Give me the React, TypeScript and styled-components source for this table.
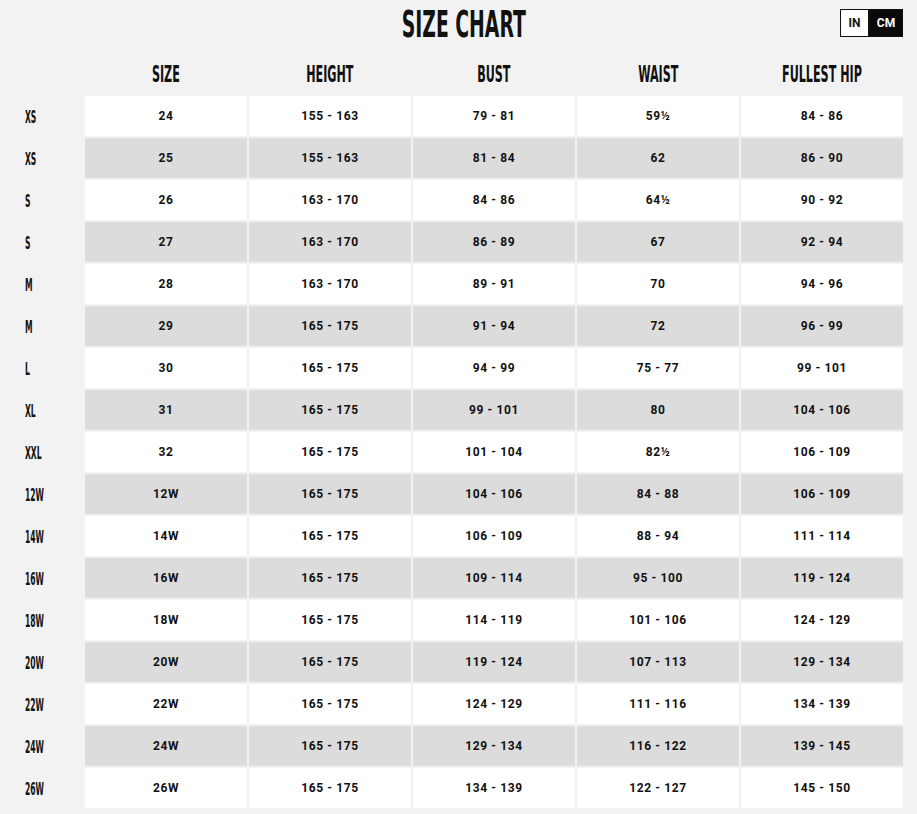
import React from "react";
import styled, { createGlobalStyle } from "styled-components";

const Global = createGlobalStyle`
  html, body { margin: 0; padding: 0; background: #f2f2f2; }
  body { font-family: "Roboto", "DejaVu Sans", sans-serif; color: #111; }
`;

const Page = styled.div`
  width: 917px;
  height: 814px;
  background: #f2f2f2;
  overflow: hidden;
`;

const Header = styled.div`
  display: grid;
  grid-template-columns: 1fr auto 1fr;
  align-items: center;
  height: 48px;
  padding: 0 14px 0 24px;
`;

const Condensed = styled.span<{ $scale: number; $origin?: string }>`
  display: inline-block;
  font-family: "DejaVu Sans Condensed", "DejaVu Sans", sans-serif;
  font-weight: 700;
  transform: scaleX(${(p) => p.$scale});
  transform-origin: ${(p) => p.$origin || "center"};
  white-space: nowrap;
`;

const Title = styled.h1`
  grid-column: 2;
  margin: 0;
  font-size: 38px;
  line-height: 48px;
  font-weight: 700;
  color: #111;
  text-align: center;
`;

const Toggle = styled.div`
  grid-column: 3;
  justify-self: end;
  display: flex;
  height: 28px;
  margin-top: -2px;
`;

const ToggleBtn = styled.button<{ $active?: boolean }>`
  box-sizing: border-box;
  height: 28px;
  padding: 0;
  width: ${(p) => (p.$active ? "34px" : "29px")};
  border: 1px solid #111;
  background: ${(p) => (p.$active ? "#0a0a0a" : "#fff")};
  color: ${(p) => (p.$active ? "#fff" : "#111")};
  font-family: "Roboto", "DejaVu Sans", sans-serif;
  font-weight: 700;
  font-size: 12px;
  cursor: pointer;
`;

const Table = styled.div`
  display: grid;
  grid-template-columns: 83px repeat(5, 162px);
  column-gap: 2px;
  row-gap: 2px;
`;

const HeadCell = styled.div`
  height: 46px;
  display: flex;
  align-items: center;
  justify-content: center;
  font-size: 23px;
  color: #111;
  padding-top: 5px;
  box-sizing: border-box;
`;

const Corner = styled.div`
  height: 46px;
`;

const RowLabel = styled.div`
  height: 40px;
  display: flex;
  align-items: center;
  padding-left: 25px;
  font-size: 18px;
  color: #111;
`;

const Cell = styled.div<{ $shade: boolean }>`
  height: 40px;
  display: flex;
  align-items: center;
  justify-content: center;
  background: ${(p) => (p.$shade ? "#dcdcdc" : "#ffffff")};
  font-family: "Roboto", "DejaVu Sans", sans-serif;
  font-weight: 700;
  font-size: 12px;
  letter-spacing: 0.6px;
  color: #111;
`;

const headers = ["SIZE", "HEIGHT", "BUST", "WAIST", "FULLEST HIP"];

const rows: string[][] = [
  ["XS", "24", "155 - 163", "79 - 81", "59½", "84 - 86"],
  ["XS", "25", "155 - 163", "81 - 84", "62", "86 - 90"],
  ["S", "26", "163 - 170", "84 - 86", "64½", "90 - 92"],
  ["S", "27", "163 - 170", "86 - 89", "67", "92 - 94"],
  ["M", "28", "163 - 170", "89 - 91", "70", "94 - 96"],
  ["M", "29", "165 - 175", "91 - 94", "72", "96 - 99"],
  ["L", "30", "165 - 175", "94 - 99", "75 - 77", "99 - 101"],
  ["XL", "31", "165 - 175", "99 - 101", "80", "104 - 106"],
  ["XXL", "32", "165 - 175", "101 - 104", "82½", "106 - 109"],
  ["12W", "12W", "165 - 175", "104 - 106", "84 - 88", "106 - 109"],
  ["14W", "14W", "165 - 175", "106 - 109", "88 - 94", "111 - 114"],
  ["16W", "16W", "165 - 175", "109 - 114", "95 - 100", "119 - 124"],
  ["18W", "18W", "165 - 175", "114 - 119", "101 - 106", "124 - 129"],
  ["20W", "20W", "165 - 175", "119 - 124", "107 - 113", "129 - 134"],
  ["22W", "22W", "165 - 175", "124 - 129", "111 - 116", "134 - 139"],
  ["24W", "24W", "165 - 175", "129 - 134", "116 - 122", "139 - 145"],
  ["26W", "26W", "165 - 175", "134 - 139", "122 - 127", "145 - 150"],
];

export default function App() {
  const [unit, setUnit] = React.useState<"in" | "cm">("cm");
  return (
    <Page>
      <Global />
      <Header>
        <Title>
          <Condensed $scale={0.55}>SIZE CHART</Condensed>
        </Title>
        <Toggle>
          <ToggleBtn $active={unit === "in"} onClick={() => setUnit("in")}>IN</ToggleBtn>
          <ToggleBtn $active={unit === "cm"} onClick={() => setUnit("cm")}>CM</ToggleBtn>
        </Toggle>
      </Header>
      <Table>
        <Corner />
        {headers.map((h) => (
          <HeadCell key={h}>
            <Condensed $scale={0.54}>{h}</Condensed>
          </HeadCell>
        ))}
        {rows.map((r, i) => (
          <React.Fragment key={i}>
            <RowLabel>
              <Condensed $scale={0.47} $origin="left">{r[0]}</Condensed>
            </RowLabel>
            {r.slice(1).map((v, j) => (
              <Cell key={j} $shade={i % 2 === 1}>{v}</Cell>
            ))}
          </React.Fragment>
        ))}
      </Table>
    </Page>
  );
}
